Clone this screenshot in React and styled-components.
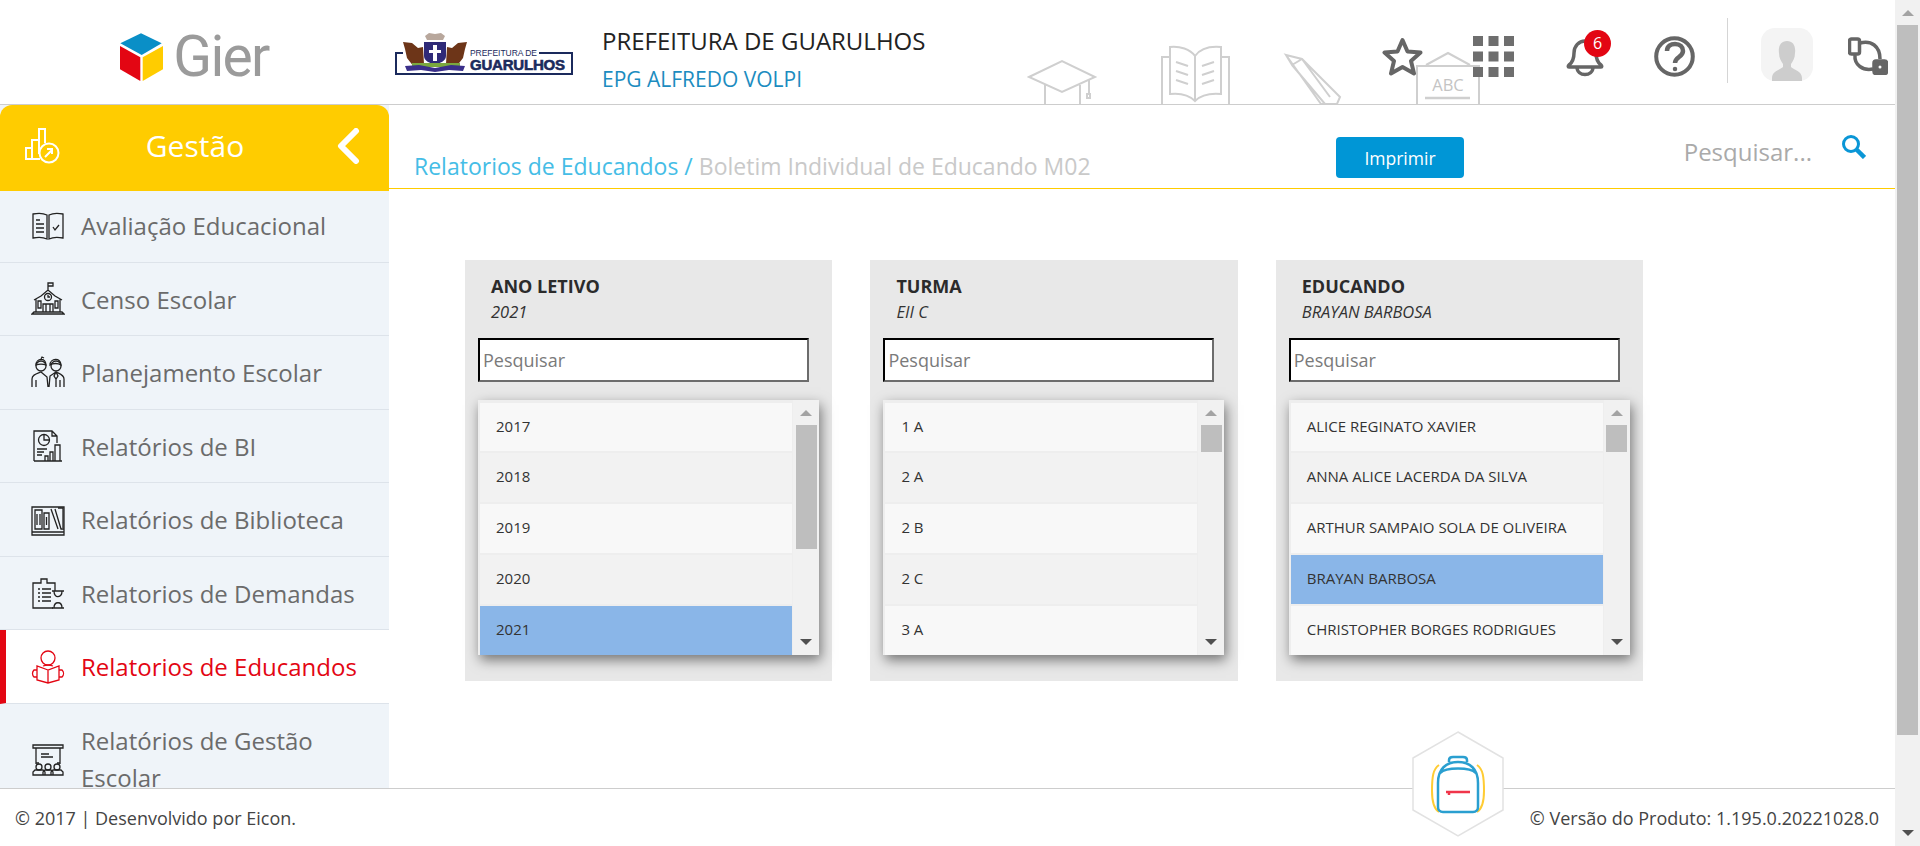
import React from "react";
import styled, { createGlobalStyle } from "styled-components";

const Global = createGlobalStyle`
  html, body { margin: 0; padding: 0; height: 100%; overflow: hidden; background: #fff; }
  body { font-family: "Open Sans", "Liberation Sans", sans-serif; }
  * { box-sizing: border-box; }
`;

const Page = styled.div`
  display: flex;
  width: 100%;
  height: 100vh;
  position: relative;
  overflow: hidden;
`;

const Main = styled.div`
  flex: 1;
  min-width: 0;
  display: flex;
  flex-direction: column;
`;

/* fake browser scrollbars */
const ScrollTrack = styled.div`
  width: ${(p) => p.$width}px;
  flex: none;
  background: #f1f1f1;
  display: flex;
  flex-direction: column;
  align-items: center;
  position: relative;
`;

const Arrow = styled.span`
  width: 0;
  height: 0;
  border-left: 6px solid transparent;
  border-right: 6px solid transparent;
  margin-top: ${(p) => p.$top}px;
  ${(p) => (p.$down ? "border-top: 6px solid #505050; margin-top: auto; margin-bottom: " + p.$top + "px;" : "border-bottom: 6px solid #a3a3a3;")}
`;

const Thumb = styled.span`
  display: block;
  width: 21px;
  height: ${(p) => p.$height}px;
  margin-top: ${(p) => p.$top}px;
  background: #bebebe;
`;

/* header */
const Header = styled.header`
  height: 105px;
  flex: none;
  display: flex;
  align-items: flex-start;
  border-bottom: 1px solid #cdcdcd;
  position: relative;
`;

const LogoArea = styled.div`
  width: 389px;
  height: 104px;
  display: flex;
  align-items: flex-start;
  justify-content: center;
  padding-top: 33px;
  gap: 9px;
  flex: none;
`;

const LogoWord = styled.span`
  font-family: Roboto, "Liberation Sans", sans-serif;
  font-size: 57px;
  font-weight: 400;
  color: #9b9b9b;
  line-height: 48px;
  letter-spacing: -1.7px;
`;

const Crest = styled.svg`
  width: 178px;
  height: 43px;
  margin: 32px 0 0 6px;
  flex: none;
`;

const Entity = styled.div`
  margin-left: 29px;
  display: flex;
  flex-direction: column;
  padding-top: 25px;
`;

const EntityName = styled.span`
  font-size: 24px;
  line-height: 32px;
  color: #222;
`;

const EntityUnit = styled.span`
  font-size: 21px;
  line-height: 30px;
  margin-top: 7px;
  color: #1c8cc0;
`;

const Doodles = styled.svg`
  position: absolute;
  left: 1020px;
  top: 40px;
  width: 470px;
  height: 64px;
`;

const Toolbar = styled.div`
  margin-left: auto;
  padding-right: 7px;
  display: flex;
  align-items: flex-start;
  position: relative;
`;

const Tool = styled.div`
  width: ${(p) => p.$w}px;
  margin-left: ${(p) => p.$gap}px;
  margin-top: ${(p) => p.$top}px;
  position: relative;
  display: flex;
`;

const Divider = styled.span`
  width: 1px;
  height: 65px;
  margin: 18px 0 0 32px;
  background: #d5d5d5;
`;

const Avatar = styled.div`
  width: 52px;
  height: 53px;
  margin: 28px 0 0 33px;
  border-radius: 14px;
  background: #f4f4f4;
  display: flex;
  align-items: flex-end;
  justify-content: center;
`;

const Badge = styled.span`
  position: absolute;
  left: 18px;
  top: -7px;
  width: 27px;
  height: 27px;
  border-radius: 50%;
  background: #e30613;
  color: #fff;
  font-size: 16px;
  line-height: 27px;
  text-align: center;
`;

/* body */
const Body = styled.div`
  flex: 1;
  min-height: 0;
  display: flex;
`;

const Sidebar = styled.aside`
  width: 389px;
  flex: none;
  background: #eff4f9;
  overflow: hidden;
`;

const Panel = styled.div`
  height: 84px;
  background: #ffcc00;
  border-radius: 12px 12px 0 0;
  box-shadow: 0 2px 0 #ffcc00;
  position: relative;
  z-index: 1;
  display: flex;
  align-items: flex-start;
  padding: 23px 29px 0 24px;
`;

const PanelTitle = styled.span`
  flex: 1;
  text-align: center;
  color: #fff;
  font-size: 30px;
  line-height: 36px;
  padding-right: 7px;
`;

const NavItem = styled.div`
  min-height: 73.5px;
  display: flex;
  align-items: center;
  padding: 18px 0 17.5px ${(p) => (p.$active ? "25px" : "31px")};
  gap: 16px;
  border-bottom: 1px solid #dde3ea;
  background: ${(p) => (p.$active ? "#fff" : "transparent")};
  border-left: ${(p) => (p.$active ? "6px solid #e30613" : "0")};
  color: ${(p) => (p.$active ? "#e30613" : "#6b6b6b")};
  font-size: 24px;
  line-height: 37px;
`;

const NavIcon = styled.svg`
  width: 34px;
  height: 34px;
  flex: none;
  fill: none;
  stroke: ${(p) => (p.$active ? "#e30613" : "#222")};
  stroke-width: 1.3;
`;

const Content = styled.main`
  flex: 1;
  min-width: 0;
`;

const Toprow = styled.div`
  height: 84px;
  border-bottom: 1px solid #ffcc00;
  display: grid;
  grid-template-columns: 922px 128px 1fr;
  padding-left: 25px;
  align-items: start;
`;

const Crumbs = styled.div`
  margin-top: 43px;
  font-size: 23px;
  line-height: 36px;
  color: #c9c9c9;
`;

const CrumbLink = styled.span`
  color: #45bde6;
`;

const PrintButton = styled.button`
  margin-top: 32px;
  height: 41px;
  width: 128px;
  border: 0;
  border-radius: 4px;
  background: #0096d6;
  color: #fff;
  font-family: inherit;
  font-size: 17.5px;
`;

const TopSearch = styled.div`
  display: flex;
  align-items: flex-start;
  justify-content: flex-end;
  padding-right: 29px;
  gap: 29px;
  margin-top: 31px;
  color: #aaa;
  font-size: 24px;
  line-height: 32px;
`;

const SearchGlyph = styled.svg`
  width: 25px;
  height: 25px;
  margin-top: -2px;
  fill: none;
  stroke: #0a96d6;
  stroke-width: 3;
`;

const Cards = styled.div`
  display: flex;
  gap: 38px;
  padding: 71px 0 0 76px;
`;

const Card = styled.section`
  width: 367.4px;
  height: 421px;
  background: #e8e8e8;
  padding: 13px 13px 0;
  display: flex;
  flex-direction: column;
`;

const CardTitle = styled.h3`
  margin: 0;
  padding-left: 13px;
  font-size: 18px;
  line-height: 26px;
  font-weight: 700;
  color: #2b2b2b;
`;

const CardValue = styled.span`
  padding-left: 13px;
  font-size: 16.5px;
  line-height: 26px;
  font-style: italic;
  color: #333;
`;

const SearchInput = styled.input`
  width: 331px;
  height: 44px;
  margin-top: 13px;
  padding: 1px 3px;
  font-family: inherit;
  font-size: 18px;
  background: #fff;
  border: 2px inset #767676;
  border-color: #1f1f1f #6c6c6c #6c6c6c #1f1f1f;
  &::placeholder { color: #7a7a7a; opacity: 1; }
`;

const ListBox = styled.div`
  width: 341px;
  height: 255px;
  margin-top: 18px;
  background: #eee;
  box-shadow: 2px 5px 12px rgba(0, 0, 0, 0.5);
  display: flex;
  justify-content: space-between;
  overflow: hidden;
`;

const Options = styled.div`
  width: 312px;
  margin-left: 2px;
  padding-top: 2.6px;
  display: flex;
  flex-direction: column;
  gap: 2px;
`;

const Option = styled.div`
  height: 48.9px;
  flex: none;
  padding: 0 0 3px 16px;
  display: flex;
  align-items: center;
  font-size: 15px;
  color: #333;
  background: ${(p) => (p.$selected ? "#8ab6e8" : p.$alt ? "#f2f2f2" : "#f8f8f8")};
`;

const Footer = styled.footer`
  height: 58px;
  flex: none;
  border-top: 1px solid #cdcdcd;
  padding: 0 16px 0 15px;
  display: flex;
  align-items: center;
  justify-content: space-between;
  font-size: 18px;
  color: #444;
`;

const Hexagon = styled.svg`
  position: absolute;
  left: 1412px;
  top: 731px;
  width: 92px;
  height: 106px;
`;

const icons = {
  book: (
    <>
      <path d="M2 5c5-1 10-1 14 1v24c-4-2-9-2-14-1zM18 6c4-2 9-2 14-1v24c-5-1-10-1-14 1z" />
      <path d="M5 11h4M5 15h8M5 19h8M5 23h8M22 18l2 3 4-5" />
    </>
  ),
  school: (
    <>
      <path d="M17 8V1h5v3h-5M5 30V17l-2 1 7-4 7-6 7 6 7 4-2-1v13M1 32h32l-2-2H3zM12 30v-8h10v8M15 22v8M19 22v8" />
      <circle cx="17" cy="15" r="3.500" />
      <path d="M7 19h3v7H7zM24 19h3v7h-3zM17 13v2h2" />
    </>
  ),
  people: (
    <>
      <circle cx="10" cy="10" r="5" /><circle cx="25" cy="10" r="5" />
      <path d="M5 9c0-7 10-8 10 0-3-1-7-1-10 0zM19 9c0-7 11-8 11 0-3-2-8-2-11 0zM10 3l1-2 2 1M1 31v-8c0-4 4-5 9-7l6 5 1 10M33 31v-8c0-4-4-5-8-7l-6 4-1 11M5 24v7M29 24v7M25 16l-2 4 2 3 2-3zM25 23v8" />
    </>
  ),
  report: (
    <>
      <path d="M3 32V2h18l5 5v7M3 32h28M21 2v5h5" />
      <circle cx="13" cy="11" r="5.500" />
      <path d="M13 5.500V11h5.500M6 20h10M6 23h7M6 26h5M14 32v-5h3v5M19 32v-9h3v9M24 32V16h5v16" />
    </>
  ),
  shelf: (
    <>
      <path d="M1 4h32v25H1zM1 29v3h32v-3" />
      <path d="M4 7v19h7V7zM6 11v11M9 11v11M13 10h5v16h-5zM15.500 14v8M20 6l7 20M24 6l6 20h3M27 5h5v20" />
    </>
  ),
  clipboard: (
    <>
      <path d="M22 32H2V7h8V3h6v4h8v8" />
      <path d="M7 13h2M11 13h9M7 17h2M11 17h9M7 21h2M11 21h9M7 25h2M11 25h9M21 15h12M21 32h12M23 15c0 8 8 7 8 0M23 32c0-7 8-7 8 0" />
    </>
  ),
  reader: (
    <>
      <circle cx="17" cy="8" r="7" />
      <path d="M17 20l-11-4v14l11 3 11-3V16zM17 20v13M6 20H3c-2 2-2 5 0 7h3M28 20h3c2 2 2 5 0 7h-3M12 16c3-1 7-1 10 0" />
    </>
  ),
  classroom: (
    <>
      <path d="M2 3h30v3H2zM5 6v16M29 6v16M5 6h24M10 12h8M10 15h12M5 21h3M26 21h3" />
      <circle cx="8" cy="25" r="3" /><circle cx="17" cy="25" r="3" /><circle cx="26" cy="25" r="3" />
      <path d="M2 33v-3l2-2h8l2 2v3zM12 33v-3l2-2h6l2 2v3zM20 33v-3l2-2h8l2 2v3z" />
    </>
  ),
};

const navItems = [
  { label: "Avaliação Educacional", icon: "book" },
  { label: "Censo Escolar", icon: "school" },
  { label: "Planejamento Escolar", icon: "people" },
  { label: "Relatórios de BI", icon: "report" },
  { label: "Relatórios de Biblioteca", icon: "shelf" },
  { label: "Relatorios de Demandas", icon: "clipboard" },
  { label: "Relatorios de Educandos", icon: "reader", active: true },
  { label: "Relatórios de Gestão Escolar", icon: "classroom" },
];

const lists = [
  { title: "ANO LETIVO", value: "2021", thumb: 124, options: ["2017", "2018", "2019", "2020", "2021"] },
  { title: "TURMA", value: "EII C", thumb: 27, options: ["1 A", "2 A", "2 B", "2 C", "3 A"] },
  {
    title: "EDUCANDO",
    value: "BRAYAN BARBOSA",
    thumb: 27,
    options: ["ALICE REGINATO XAVIER", "ANNA ALICE LACERDA DA SILVA", "ARTHUR SAMPAIO SOLA DE OLIVEIRA", "BRAYAN BARBOSA", "CHRISTOPHER BORGES RODRIGUES"],
  },
];

function App() {
  return (
    <Page>
      <Global />
      <Main>
        <Header>
          <LogoArea>
            <svg width="44" height="48" viewBox="119 33 44 48">
              <path fill="#0a8fc7" d="M140 33.3l20.7 10-20 11.7-21.400-11.700z" />
              <path fill="#e30613" d="M119 46l20.300 11.300V81L119 69.300z" />
              <path fill="#ffcc00" d="M141.700 57.300L162 46v23.300L141.700 81z" />
            </svg>
            <LogoWord>Gier</LogoWord>
          </LogoArea>
          <Crest viewBox="395 32 178 43">
            <path fill="none" stroke="#1b2a5c" strokeWidth="2" d="M403 53h-7v21h176V53h-33" />
            <path fill="#6d3518" d="M403 42l9 1 6 5 5-1 1 17-10 3-7-9-2-9zM467 42l-9 1-6 5-5-1-1 17 10 3 7-9 2-9z" />
            <path fill="#2f2a78" d="M424 42h22v14c0 5-6 7-11 9-5-2-11-4-11-9z" />
            <path fill="#fff" d="M433 45h4v5h4v3h-4v8h-4v-8h-4v-3h4z" />
            <path fill="#b8a79c" d="M425 36l4-3 6 1 6-1 4 3-2 4h-16z" />
            <path fill="#7aa83f" d="M412 63h48v4h-48z" />
            <path fill="#3a2f8a" d="M405 66l14-1 16 3 16-3 14 1-2 5-14-1-14 2-14-2-14 1z" />
            <text x="470" y="56" fontFamily="Liberation Sans, sans-serif" fontSize="8.500" fill="#1b2a5c" textLength="67">PREFEITURA DE</text>
            <text x="470" y="70" fontFamily="Liberation Sans, sans-serif" fontSize="15" fontWeight="700" stroke="#1b2a5c" strokeWidth="0.600" fill="#1b2a5c" textLength="95">GUARULHOS</text>
          </Crest>
          <Entity>
            <EntityName>PREFEITURA DE GUARULHOS</EntityName>
            <EntityUnit>EPG ALFREDO VOLPI</EntityUnit>
          </Entity>
          <Doodles viewBox="1020 40 470 64" fill="none" stroke="#cfcfcf" strokeWidth="2">
            <path d="M1029 77l33-16 33 16-33 15zM1045 85v19M1080 85v19M1089 79v15M1087 94h3v4h-3z" />
            <path d="M1195 101c-6-6-16-8-25-7V47c10-1 20 2 25 9 5-7 15-10 26-9v47c-11-1-20 1-26 7zM1195 56v45M1170 57h-8v47M1221 57h8v47" />
            <path d="M1176 62l12 4M1176 71l12 4M1176 80l12 4M1214 62l-12 4M1214 71l-12 4M1214 80l-12 4" />
            <path d="M1286 55l16 4 38 38-3 7h-16zM1286 55l6 10 10-6M1292 65l33 39M1302 59l28 38" />
            <path d="M1417 104V66h62v38M1426 65l22-12 22 12" />
            <path strokeWidth="2.500" d="M1425 98h45" />
            <text x="1448" y="91" fontFamily="Open Sans, sans-serif" fontSize="16.500" textAnchor="middle" fill="#c4c4c4" stroke="none">ABC</text>
          </Doodles>
          <Toolbar>
            <Tool $w={41} $gap={0} $top={37}>
              <svg width="41" height="39" viewBox="0 0 41 39" fill="none" stroke="#666" strokeWidth="4" strokeLinejoin="round">
                <path d="M20.500 3l5 11.500 13 1-9.500 8.500 3 12.500-11.500-6.500L9 36.500l3-12.500-9.500-8.500 13-1z" />
              </svg>
            </Tool>
            <Tool $w={41} $gap={50} $top={36}>
              <svg width="41" height="41" viewBox="0 0 41 41" fill="#6e6e6e">
                <path d="M0 0h10v10H0zM15.500 0h10v10h-10zM31 0h10v10H31zM0 15.500h10v10H0zM15.500 15.500h10v10h-10zM31 15.500h10v10H31zM0 31h10v10H0zM15.500 31h10v10h-10zM31 31h10v10H31z" />
              </svg>
            </Tool>
            <Tool $w={45} $gap={52} $top={37}>
              <svg width="39" height="40" viewBox="0 0 39 40" fill="none" stroke="#666" strokeWidth="3.500" strokeLinejoin="round">
                <path d="M3 28c4-3 5-6 5-12 0-7 5-12 11-12s11 5 11 12c0 6 1 9 5 12 1 1 1 2 0 2H3c-1 0-1-1 0-2zM11 30c0 10 16 10 16 0" />
              </svg>
              <Badge>6</Badge>
            </Tool>
            <Tool $w={41} $gap={43} $top={36}>
              <svg width="41" height="41" viewBox="0 0 41 41" fill="none" stroke="#666" strokeWidth="4">
                <circle cx="20.500" cy="20.500" r="18.300" />
                <path strokeWidth="4.500" d="M13 15c0-5 4-7 8-7 5 0 8 3 8 7 0 6-8 6-8 12" />
                <circle cx="21" cy="33" r="1.500" fill="#666" strokeWidth="1.500" />
              </svg>
            </Tool>
            <Divider />
            <Avatar>
              <svg width="30" height="40" viewBox="0 0 30 40" fill="#cdcdcd">
                <path d="M15 0c6 0 9 5 8 12 0 5-2 8-4 11v3c3 3 11 4 11 11v3H0v-3c0-7 8-8 11-11v-3c-2-3-4-6-4-11C6 5 9 0 15 0z" />
              </svg>
            </Avatar>
            <Tool $w={40} $gap={35} $top={37}>
              <svg width="40" height="38" viewBox="0 0 40 38" fill="none" stroke="#666" strokeWidth="3.500">
                <path d="M12 6c11-3 20 3 20 16M7 18c-1 10 8 16 18 14" />
                <rect x="1.500" y="2" width="10" height="15" rx="2" />
                <rect x="26" y="24" width="12.500" height="12.500" rx="2" fill="#666" />
                <circle cx="32" cy="30" r="1.500" fill="#fff" stroke="none" />
              </svg>
            </Tool>
          </Toolbar>
        </Header>
        <Body>
          <Sidebar>
            <Panel>
              <svg width="36" height="36" viewBox="0 0 36 36" fill="none" stroke="#fff" strokeWidth="2">
                <path d="M2 31V20h6v11zM8 31V12h7v14M15 18V1h6v14M2 31h14" />
                <circle cx="25" cy="25" r="9.500" />
                <path d="M21 29l7-7M23 21h5v5" />
              </svg>
              <PanelTitle>Gestão</PanelTitle>
              <svg width="23" height="36" viewBox="0 0 23 36" fill="none" stroke="#fff" strokeWidth="6" strokeLinecap="round" strokeLinejoin="round">
                <path d="M19 3L4 18l15 15" />
              </svg>
            </Panel>
            {navItems.map((item) => (
              <NavItem key={item.label} $active={item.active}>
                <NavIcon viewBox="0 0 34 34" $active={item.active}>{icons[item.icon]}</NavIcon>
                <span>{item.label}</span>
              </NavItem>
            ))}
          </Sidebar>
          <Content>
            <Toprow>
              <Crumbs><CrumbLink>Relatorios de Educandos /</CrumbLink> Boletim Individual de Educando M02</Crumbs>
              <PrintButton>Imprimir</PrintButton>
              <TopSearch>
                <span>Pesquisar...</span>
                <SearchGlyph viewBox="0 0 25 25">
                  <circle cx="10" cy="10" r="7.500" />
                  <path strokeWidth="4.500" d="M15.500 15.500l8 8" />
                </SearchGlyph>
              </TopSearch>
            </Toprow>
            <Cards>
              {lists.map((list) => (
                <Card key={list.title}>
                  <CardTitle>{list.title}</CardTitle>
                  <CardValue>{list.value}</CardValue>
                  <SearchInput placeholder="Pesquisar" />
                  <ListBox>
                    <Options>
                      {list.options.map((option, i) => (
                        <Option key={option} $alt={i % 2 === 1} $selected={option === list.value}>{option}</Option>
                      ))}
                    </Options>
                    <ScrollTrack $width={26}>
                      <Arrow $top={10} />
                      <Thumb $top={9} $height={list.thumb} />
                      <Arrow $down $top={10} />
                    </ScrollTrack>
                  </ListBox>
                </Card>
              ))}
            </Cards>
          </Content>
        </Body>
        <Footer>
          <span>© 2017 | Desenvolvido por Eicon.</span>
          <span>© Versão do Produto: 1.195.0.20221028.0</span>
        </Footer>
      </Main>
      <ScrollTrack $width={25}>
        <Arrow $top={10} />
        <Thumb $top={9} $height={710} />
        <Arrow $down $top={10} />
      </ScrollTrack>
      <Hexagon viewBox="0 0 92 106">
        <path fill="#fff" stroke="#e2e2e2" strokeWidth="1.500" d="M46 1l45 26v52l-45 26L1 79V27z" />
        <g fill="none">
          <path stroke="#ffcc33" strokeWidth="2" d="M27 34c-6 4-7 12-7 26 0 10 2 18 7 21M65 34c6 4 7 12 7 26 0 10-2 18-7 21" />
          <path stroke="#2a9fd0" strokeWidth="2.500" d="M26 52c0-14 8-21 20-21s20 7 20 21v24c0 3-2 5-5 5H31c-3 0-5-2-5-5zM37 31v-2c0-2 2-3 4-3h10c2 0 4 1 4 3v2M28 42c6-6 30-6 36 0" />
          <path stroke="#f0354a" strokeWidth="2.500" d="M34 61h24M37 61v3" />
        </g>
      </Hexagon>
    </Page>
  );
}

export default App;
